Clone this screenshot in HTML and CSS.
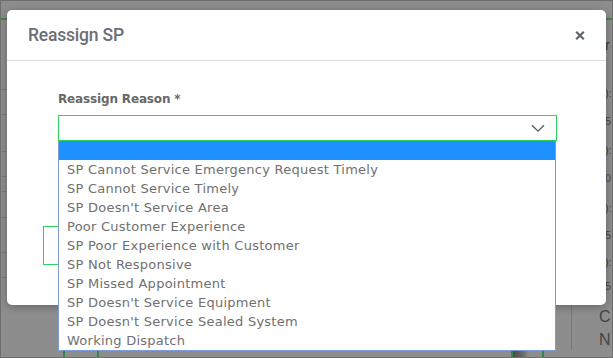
FILE: index.html
```html
<!DOCTYPE html>
<html lang="en">
<head>
<meta charset="utf-8">
<title>Reassign SP</title>
<link rel="stylesheet" href="styles.css">
</head>
<body>
<div class="page">
  <div class="bg">
    <div class="bg-topline"></div>
    <div class="bg-grid">
      <div class="bg-rows">
        <div class="bg-row r1"></div>
        <div class="bg-row r2"></div>
        <div class="bg-row r3"></div>
        <div class="bg-row r4"></div>
        <div class="bg-row r5"></div>
        <div class="bg-row r6"></div>
        <div class="bg-row r7"></div>
        <div class="bg-row r8"></div>
      </div>
      <div class="bg-mid"></div>
      <div class="bg-side">
        <div class="bg-t t-head">r</div>
        <div class="bg-t s1">):</div>
        <div class="bg-t s2">5</div>
        <div class="bg-t s3">):</div>
        <div class="bg-t s4">0</div>
        <div class="bg-t s5">):</div>
        <div class="bg-t s6">5</div>
        <div class="bg-t s7">):</div>
        <div class="bg-t s8">5</div>
        <div class="bg-big c1">C</div>
        <div class="bg-big c2">N</div>
      </div>
    </div>
    <div class="bg-buttons">
      <div class="bg-btn b1"></div>
      <div class="bg-btn b2"></div>
    </div>
  </div>

  <div class="modal">
    <div class="modal-header">
      <h4 class="modal-title">Reassign SP</h4>
      <span class="close" aria-label="Close">
        <svg width="10" height="9" viewBox="0 0 10 9"><path d="M1.2 0.8 L8.8 8.2 M8.8 0.8 L1.2 8.2" stroke="#5f636a" stroke-width="2.2" stroke-linecap="butt" fill="none"/></svg>
      </span>
    </div>
    <div class="modal-body">
      <label class="field-label">Reassign Reason *</label>
      <div class="select-wrap">
        <div class="select">
          <svg class="chev" width="14" height="9" viewBox="0 0 14 9"><path d="M1 1.2 L7 7.2 L13 1.2" stroke="#55585e" stroke-width="1.3" fill="none"/></svg>
        </div>
        <ul class="dropdown">
          <li class="opt active">&nbsp;</li>
          <li class="opt">SP Cannot Service Emergency Request Timely</li>
          <li class="opt">SP Cannot Service Timely</li>
          <li class="opt">SP Doesn't Service Area</li>
          <li class="opt">Poor Customer Experience</li>
          <li class="opt">SP Poor Experience with Customer</li>
          <li class="opt">SP Not Responsive</li>
          <li class="opt">SP Missed Appointment</li>
          <li class="opt">SP Doesn't Service Equipment</li>
          <li class="opt">SP Doesn't Service Sealed System</li>
          <li class="opt">Working Dispatch</li>
        </ul>
      </div>
      <div class="hidden-field"></div>
    </div>
  </div>
</div>
</body>
</html>
```

FILE: styles.css
```css
* { box-sizing: border-box; }
html, body { margin: 0; padding: 0; }
body { font-family: "DejaVu Sans", sans-serif; }

.page {
  position: relative;
  width: 613px;
  height: 358px;
  overflow: hidden;
  background: #8d8d8d;
  border: 1px solid #6e6e6e;
}

.bg { display: flex; flex-direction: column; height: 100%; }
.bg-topline { height: 2px; margin-top: 17px; background: #3c8a45; }
.bg-grid {
  display: grid;
  grid-template-columns: 300px 1fr 41px;
  flex: 1;
}
.bg-rows { display: flex; flex-direction: column; }
.bg-row { border-bottom: 1px solid #7b7b7b; }
.r1 { height: 70px; }
.r2 { height: 25px; }
.r3 { height: 37px; }
.r4 { height: 25px; }
.r5 { height: 15px; }
.r6 { height: 26px; }
.r7 { height: 35px; }
.r8 { height: 25px; }

.bg-side {
  border-left: 1px solid #7a7a7a;
  display: flex;
  flex-direction: column;
  padding-left: 33px;
  font-family: "Liberation Sans", sans-serif;
  color: #474747;
}
.bg-t { font-size: 11px; line-height: 14px; height: 14px; }
.t-head { font-size: 15px; line-height: 18px; height: 18px; margin-top: 16px; color: #3e3e3e; }
.s1 { margin-top: 32px; }
.s2 { margin-top: 14px; }
.s3 { margin-top: 15px; }
.s4 { margin-top: 14px; }
.s5 { margin-top: 16px; }
.s6 { margin-top: 13px; }
.s7 { margin-top: 13px; }
.s8 { margin-top: 10px; }
.bg-big { font-size: 16px; line-height: 20px; height: 20px; margin-left: -6px; color: #444; }
.c1 { margin-top: 14px; }
.c2 { margin-top: 3px; }

.bg-buttons { display: flex; height: 7px; }
.bg-btn { height: 7px; }
.b1 { margin-left: 62px; width: 36px; border-left: 2px solid #2f8a3c; border-right: 2px solid #2f8a3c; }
.b2 { margin-left: 412px; width: 33px; border-left: 2px solid #2f8a3c; border-right: 2px solid #2f8a3c;
      background: linear-gradient(to right, #4a4a4a, #6a6a6a 10px, #8d8d8d 16px); }

/* Modal */
.modal {
  position: absolute;
  left: 6px;
  top: 9px;
  width: 599px;
  height: 295px;
  background: #fff;
  border-radius: 5px;
  box-shadow: 0 2px 8px rgba(0,0,0,0.28);
}
.modal-header {
  height: 51px;
  border-bottom: 1px solid #dcdcdc;
  display: flex;
  align-items: center;
  justify-content: space-between;
  padding: 0 21px 0 21px;
}
.modal-title {
  margin: 0;
  font-family: Roboto, "Liberation Sans", sans-serif;
  font-weight: 500;
  font-size: 17.5px;
  color: #6b6e75;
  letter-spacing: -0.2px;
}
.close { display: flex; width: 10px; height: 9px; margin-top: 1px; }

.modal-body { padding: 31px 49px 0 51px; }
.field-label {
  display: block;
  font-family: "DejaVu Sans", sans-serif;
  font-weight: bold;
  font-size: 12px;
  line-height: 15px;
  color: #676767;
  letter-spacing: -0.15px;
  margin-bottom: 8px;
}
.select-wrap { position: relative; }
.select {
  height: 26px;
  border: 1px solid #2bd45b;
  background: #fff;
  display: flex;
  align-items: center;
  justify-content: flex-end;
  padding-right: 11px;
}
.chev { display: block; }

.dropdown {
  position: absolute;
  z-index: 5;
  top: 100%;
  left: 0;
  width: 498px;
  margin: 0;
  padding: 0;
  list-style: none;
  background: #fff;
  border: 1px solid #7d9bd8;
  border-top: none;
}
.opt {
  height: 19px;
  line-height: 19px;
  padding-left: 8px;
  font-family: "DejaVu Sans", sans-serif;
  font-size: 13px;
  letter-spacing: 0.25px;
  color: #707070;
  white-space: nowrap;
}
.opt.active { background: #1e90ff; }

.hidden-field {
  margin-top: 85px;
  margin-left: -15px;
  width: 200px;
  height: 39px;
  border: 1px solid #2bd45b;
}
```
